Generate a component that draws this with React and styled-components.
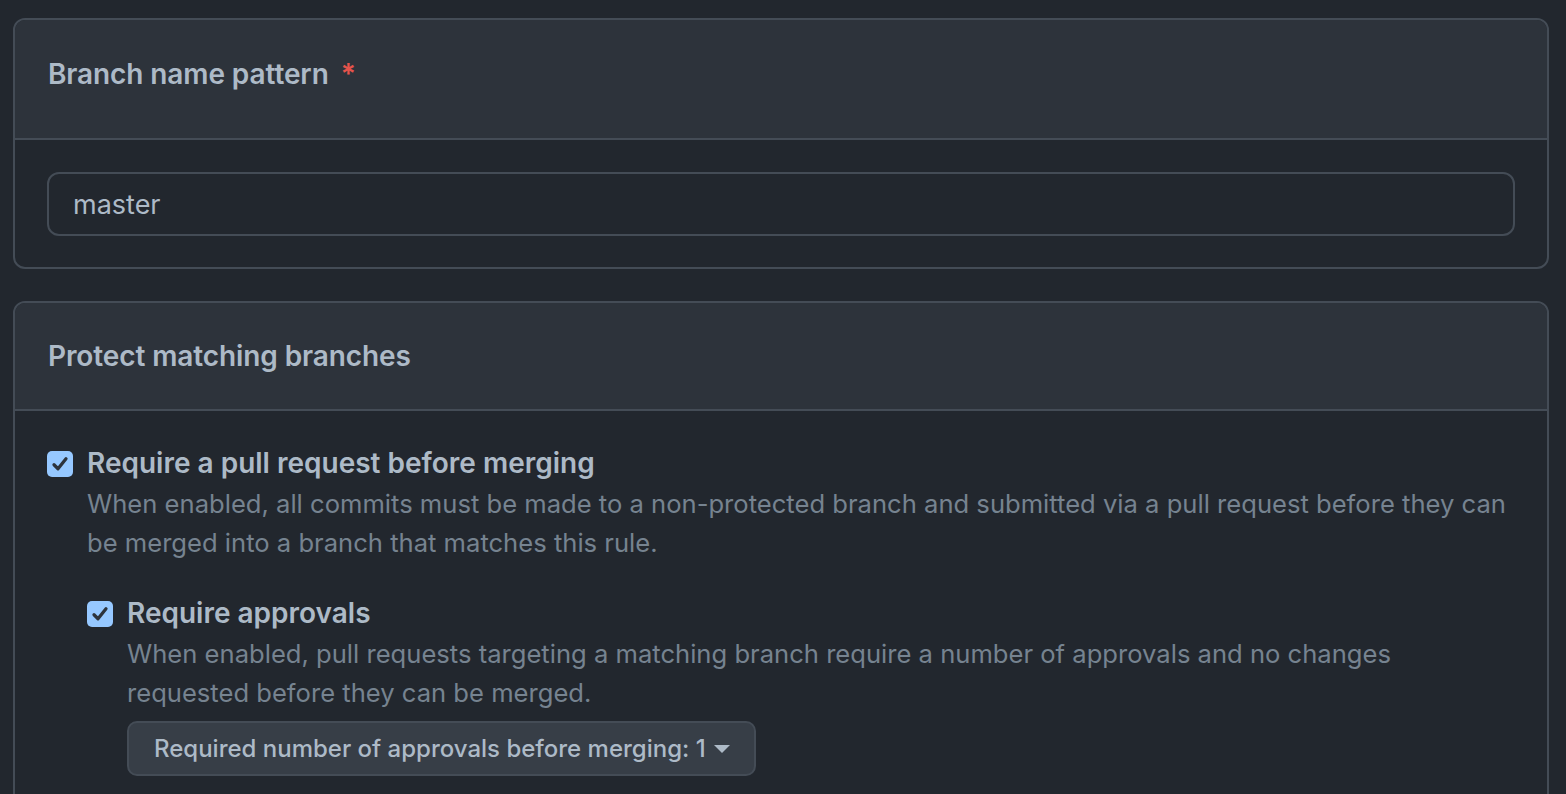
import React from "react";
import styled, { createGlobalStyle } from "styled-components";

const Global = createGlobalStyle`
    html, body {
        margin: 0;
        background: #22272e;
    }
    body {
        font-family: Inter, "Noto Sans", "Liberation Sans", sans-serif;
        color: #adbac7;
        overflow: hidden;
    }
`;

const Page = styled.div`
    display: flex;
    flex-direction: column;
    gap: 32px;
    padding: 18px 17px 0 13px;
`;

const Card = styled.section`
    border: 2px solid #444c56;
    border-radius: 12px;
    overflow: hidden;
    background: #22272e;
`;

const CardHeader = styled.header`
    display: flex;
    align-items: center;
    height: ${(p) => p.$height}px;
    padding: 0 33px;
    padding-bottom: ${(p) => p.$shift || 0}px;
    box-sizing: border-box;
    background: #2d333b;
    border-bottom: 2px solid #444c56;
`;

const Title = styled.h2`
    margin: 0;
    font-size: 28px;
    font-weight: 600;
    color: #adbac7;
    letter-spacing: -0.1px;
`;

const Required = styled.span`
    color: #e5534b;
    margin-left: 12px;
`;

const CardBody = styled.div`
    padding: ${(p) => p.$padding};
`;

const TextInput = styled.input`
    display: block;
    width: 100%;
    height: 64px;
    box-sizing: border-box;
    padding: 0 24px;
    background: #22272e;
    border: 2px solid #444c56;
    border-radius: 12px;
    color: #adbac7;
    font-family: inherit;
    font-size: 27px;
    outline: none;
`;

const Rule = styled.div`
    display: flex;
    gap: 14px;
    margin-top: ${(p) => p.$top || 0}px;
`;

const Box = styled.span`
    flex: none;
    width: 26px;
    height: 26px;
    margin-top: 6px;
    border-radius: 5px;
    background: #96c8ff;
    display: flex;
    align-items: center;
    justify-content: center;
`;

const RuleText = styled.div`
    display: flex;
    flex-direction: column;
    flex: 1;
`;

const RuleTitle = styled.div`
    font-size: 28px;
    font-weight: 600;
    line-height: 36px;
    color: #adbac7;
    margin-bottom: 3px;
`;

const Note = styled.p`
    margin: 0;
    font-size: 25.6px;
    line-height: 39px;
    color: #768390;
`;

const Select = styled.button`
    align-self: flex-start;
    display: flex;
    align-items: center;
    gap: 8px;
    height: 55px;
    margin-top: 9px;
    padding: 0 24px 0 25px;
    box-sizing: border-box;
    background: #373e47;
    border: 2px solid #444c56;
    border-radius: 10px;
    color: #adbac7;
    font-family: inherit;
    font-size: 24px;
    font-weight: 500;
`;

const Caret = styled.span`
    width: 0;
    height: 0;
    border-left: 8px solid transparent;
    border-right: 8px solid transparent;
    border-top: 8px solid #adbac7;
`;

const Check = () => (
    <svg width="20" height="20" viewBox="0 0 16 16" fill="none">
        <path
            d="M3.2 8.6 L6.4 11.8 L12.8 3.8"
            stroke="#2d333b"
            strokeWidth="2.6"
            strokeLinecap="round"
            strokeLinejoin="round"
        />
    </svg>
);

const Checkbox = () => (
    <Box>
        <Check />
    </Box>
);

export default () => {
    return (
        <Page>
            <Global />
            <Card>
                <CardHeader $height={120} $shift={10}>
                    <Title>
                        Branch name pattern<Required>*</Required>
                    </Title>
                </CardHeader>
                <CardBody $padding="32px 32px 31px 32px">
                    <TextInput defaultValue="master" />
                </CardBody>
            </Card>
            <Card>
                <CardHeader $height={108}>
                    <Title>Protect matching branches</Title>
                </CardHeader>
                <CardBody $padding="34px 32px 80px 32px">
                    <Rule>
                        <Checkbox />
                        <RuleText>
                            <RuleTitle>Require a pull request before merging</RuleTitle>
                            <Note>
                                When enabled, all commits must be made to a
                                non-protected branch and submitted via a pull
                                request before they can be merged into a branch
                                that matches this rule.
                            </Note>
                            <Rule $top={33}>
                                <Checkbox />
                                <RuleText>
                                    <RuleTitle>Require approvals</RuleTitle>
                                    <Note>
                                        When enabled, pull requests targeting a
                                        matching branch require a number of
                                        approvals and no changes requested
                                        before they can be merged.
                                    </Note>
                                    <Select>
                                        Required number of approvals before
                                        merging: 1
                                        <Caret />
                                    </Select>
                                </RuleText>
                            </Rule>
                        </RuleText>
                    </Rule>
                </CardBody>
            </Card>
        </Page>
    );
};
